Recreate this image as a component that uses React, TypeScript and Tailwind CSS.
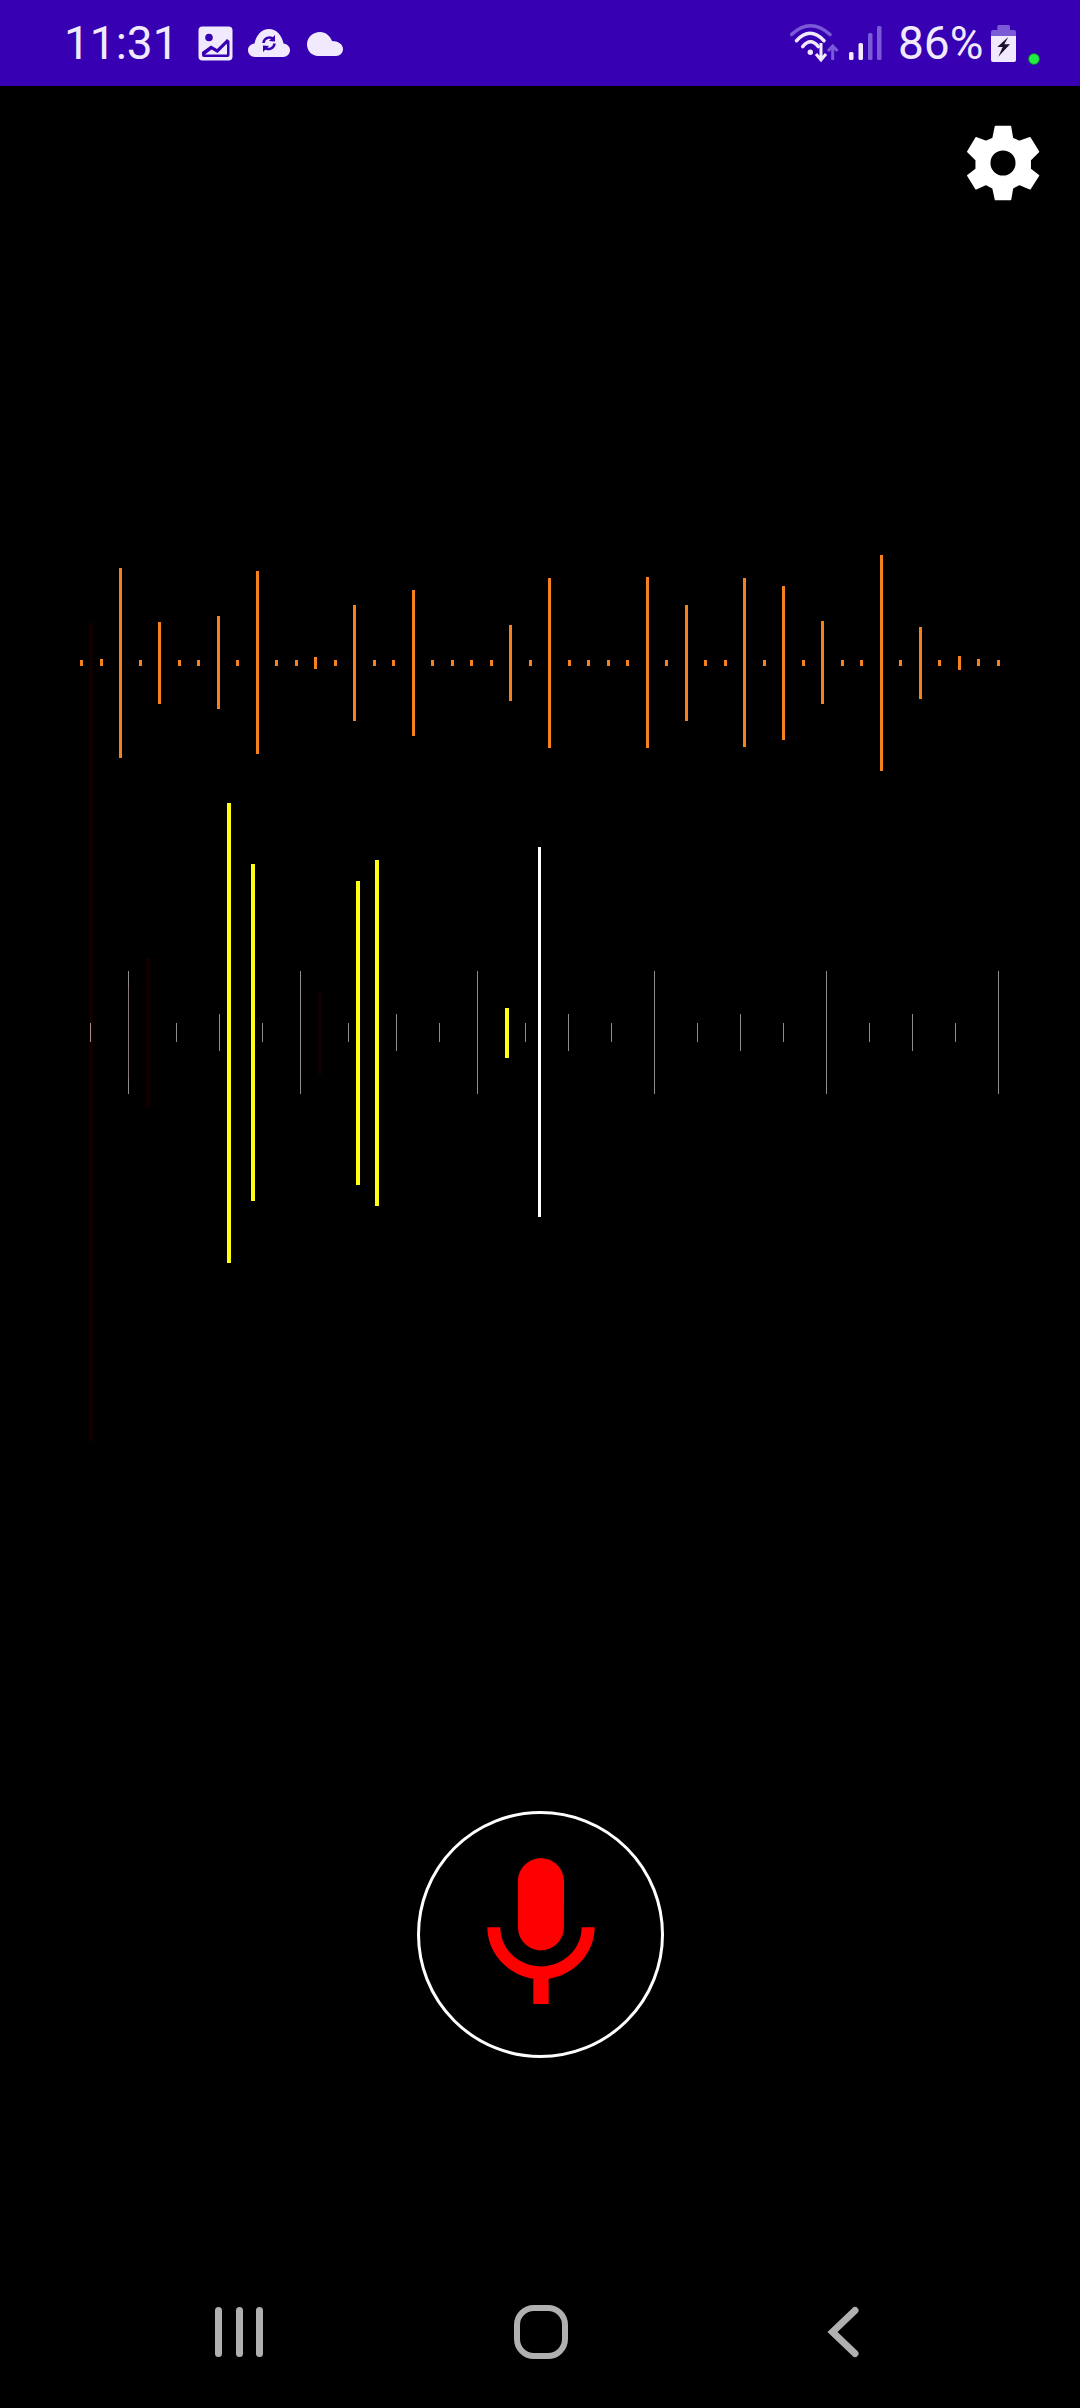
const smallO = 6;
type Bar = [number, number, number];
const orangeBars: Bar[] = [];
const orangeTall: Record<number, [number, number]> = {
  1: [659, 666], 2: [568, 758], 4: [622, 704], 7: [616, 709], 9: [571, 754], 12: [657, 669], 14: [605, 721],
  17: [590, 736], 22: [625, 701], 24: [578, 748], 29: [577, 748], 31: [605, 721], 34: [578, 747], 36: [586, 740],
  38: [621, 704], 41: [555, 771], 43: [627, 699], 45: [656, 670], 46: [659, 666],
};
for (let i = 0; i < 48; i++) {
  const x = Math.round(80 + (i * 917) / 47);
  const t = orangeTall[i];
  orangeBars.push([x, t ? t[0] : 660, t ? t[1] : 660 + smallO]);
}
const S: [number, number] = [1023, 1042];
const M: [number, number] = [1014, 1051];
const L: [number, number] = [971, 1094];
const ticks: [number, [number, number]][] = [
  [90, S], [128, L], [176, S], [219, M], [262, S], [300, L], [348, S], [396, M], [439, S], [477, L], [525, S], [568, M],
  [611, S], [654, L], [697, S], [740, M], [783, S], [826, L], [869, S], [912, M], [955, S], [998, L],
];
const dark: Bar[] = [[89, 623, 1441], [146, 958, 1107], [318, 991, 1074]];
const yellow: Bar[] = [[227, 803, 1263], [251, 864, 1201], [356, 881, 1185], [375, 860, 1206], [505, 1008, 1058]];

function Waveforms() {
  return (
    <svg width="1080" height="920" viewBox="0 540 1080 920" shapeRendering="crispEdges" className="block">
      {dark.map(([x, a, b], i) => (
        <rect key={i} x={x} y={a} width="4" height={b - a} fill="#100000" />
      ))}
      {orangeBars.map(([x, a, b], i) => (
        <rect key={i} x={x} y={a} width="3" height={b - a} fill="#f5821f" />
      ))}
      {ticks.map(([x, [a, b]], i) => (
        <rect key={i} x={x} y={a} width="1" height={b - a} fill="#8c8c8c" />
      ))}
      <rect x="90" y="1024" width="1" height="18" fill="#a09090" />
      <rect x="128" y="987" width="1" height="91" fill="#8c7878" />
      {yellow.map(([x, a, b], i) => (
        <rect key={i} x={x} y={a} width="4" height={b - a} fill="#ffff14" />
      ))}
      <rect x="538" y="847" width="3" height="370" fill="#ffffff" />
    </svg>
  );
}

function StatusBar() {
  const ink = "#f1e9fd";
  const dim = "#7b5ad6";
  return (
    <div className="flex h-[86px] items-center bg-[#3700b3] pr-[40px] font-['Roboto',sans-serif] text-[46px] leading-none text-[#f1e9fd]">
      <span className="ml-[64px] w-[116px]">11:31</span>
      <svg className="ml-[18px]" width="35" height="35" viewBox="0 0 35 35">
        <rect x="0.500" y="0.500" width="34" height="34" rx="4" fill={ink} />
        <circle cx="11" cy="11.500" r="3.800" fill="#3700b3" />
        <path d="M4 29 L4 26 L13 19.500 L19 23 L29 13 L31.500 15 L31.500 29 Q31.500 31 29.500 31 L6 31 Q4 31 4 29 Z" fill="#3700b3" />
        <path d="M7 28.500 L13.500 23.500 L19.500 27 L28.500 18 L29 18.500 L29 28.500 Z" fill={ink} />
      </svg>
      <svg className="ml-[15px]" width="42" height="28" viewBox="0 0 42 28">
        <path d="M7 28 C3 28 0 25 0 21 C0 17.500 3 15 6.500 14.500 C8 6 14 0 21 0 C28 0 34 6 35.500 14.500 C39 15 42 17.500 42 21 C42 25 39 28 35 28 Z" fill={ink} />
        <path d="M15.500 14 A6 6 0 0 1 25.500 10" fill="none" stroke="#3700b3" strokeWidth="2.500" />
        <path d="M27 6 L27 12.500 L21 12 Z" fill="#3700b3" />
        <path d="M26.500 14.500 A6 6 0 0 1 16.500 18.500" fill="none" stroke="#3700b3" strokeWidth="2.500" />
        <path d="M15 23 L15 16.500 L21 17 Z" fill="#3700b3" />
      </svg>
      <svg className="ml-[17px] mt-[2px]" width="36" height="24" viewBox="0 0 36 24">
        <path d="M11 24 C5 24 0 19 0 12.500 C0 5 6 0 13 0 C19 0 23 4 25 9 C31 9 36 12 36 17 C36 21 33 24 29 24 Z" fill={ink} />
      </svg>
      <div className="flex-1" />
      <svg width="50" height="42" viewBox="0 0 50 42">
        <path d="M1.500 12.500 Q20.500 -5 40 12.500" fill="none" stroke={dim} strokeWidth="3.500" strokeLinecap="round" />
        <path d="M6.500 18.700 Q20 4 34 18.700" fill="none" stroke={ink} strokeWidth="3.500" strokeLinecap="round" />
        <path d="M12.700 24.700 Q20.500 15 28.300 24.700" fill="none" stroke={ink} strokeWidth="3.500" strokeLinecap="round" />
        <circle cx="20.300" cy="30.300" r="2.700" fill={ink} />
        <path d="M31 21 L31 37 M26 32 L31 38 L36 32" fill="none" stroke={ink} strokeWidth="3" />
        <path d="M42.700 38 L42.700 25 M38 29 L42.700 24 L47.500 29" fill="none" stroke={dim} strokeWidth="3" />
      </svg>
      <svg className="ml-[9px]" width="33" height="34" viewBox="0 0 33 34">
        <rect x="0" y="26" width="4.500" height="8" rx="1.500" fill={ink} />
        <rect x="9.500" y="17" width="4.500" height="17" rx="1.500" fill={ink} />
        <rect x="19" y="7" width="4.500" height="27" rx="1.500" fill={dim} />
        <rect x="28" y="0" width="4.500" height="34" rx="1.500" fill={dim} />
      </svg>
      <span className="ml-[16px] w-[88px]">86%</span>
      <svg className="ml-[5px]" width="25" height="37" viewBox="0 0 25 37">
        <rect x="6.300" y="0" width="12.700" height="7" rx="1.500" fill={dim} />
        <path d="M2 5 H23 Q25 5 25 7 V12 H0 V7 Q0 5 2 5 Z" fill={dim} />
        <path d="M0 11 H25 V35 Q25 37 23 37 H2 Q0 37 0 35 Z" fill={ink} />
        <path d="M17.300 12 L6.300 22 L11.700 22 L7.300 31.700 L19 19.300 L13.300 19.300 Z" fill="#1a1030" />
      </svg>
      <span className="ml-[12px] mt-[32px] h-[12px] w-[12px] rounded-full border border-[#0e6b3a] bg-[#22ee44]" />
    </div>
  );
}

export default function App() {
  return (
    <div className="flex h-[2408px] w-[1080px] flex-col overflow-hidden bg-black">
      <StatusBar />
      <div className="mr-[39px] mt-[39px] flex justify-end">
        <svg width="74" height="76" viewBox="0 0 74 76">
          <path
            fillRule="evenodd"
            fill="#ffffff"
            stroke="#ffffff"
            strokeWidth="1.500"
            strokeLinejoin="round"
            d="M28.500 1.500 L43.500 1.500 L45.500 13.500 L52.300 16.500 L63 12.800 L71.500 26.700 L63.200 35 L63.200 44 L71.500 50.700 L63 63.800 L52.300 59.300 L45.500 63 L43.500 74.500 L28.500 74.500 L26 63 L19 59.300 L9 63.800 L0.800 50.700 L9.200 44 L9.200 35 L0.800 26.700 L9 12.800 L19 16.500 L26 13.500 Z M36 24.700 A13.300 13.300 0 1 0 36 51.300 A13.300 13.300 0 1 0 36 24.700 Z"
          />
        </svg>
      </div>
      <div className="mt-[339px]">
        <Waveforms />
      </div>
      <div className="mt-[351px] flex justify-center">
        <div className="ml-[1px] flex h-[247px] w-[247px] items-center justify-center rounded-full border-[3px] border-white">
          <svg width="184" height="184" viewBox="0 0 24 24" fill="#ff0000">
            <path d="M12 14c1.660 0 2.990-1.340 2.990-3L15 5c0-1.660-1.340-3-3-3S9 3.340 9 5v6c0 1.660 1.340 3 3 3zm5.300-3c0 3-2.540 5.100-5.300 5.100S6.700 14 6.700 11H5c0 3.410 2.720 6.230 6 6.720V21h2v-3.280c3.280-.48 6-3.300 6-6.720h-1.700z" />
          </svg>
        </div>
      </div>
      <div className="mt-[247px] flex h-[54px] items-center">
        <div className="ml-[215px] flex h-[50px] w-[48px] justify-between">
          <div className="w-[7px] rounded-full bg-[#b0b0b0]" />
          <div className="w-[7px] rounded-full bg-[#b0b0b0]" />
          <div className="w-[7px] rounded-full bg-[#b0b0b0]" />
        </div>
        <div className="ml-[251px] h-[54px] w-[54px] rounded-[20px] border-[6px] border-[#b0b0b0]" />
        <svg className="ml-[258px]" width="34" height="54" viewBox="0 0 34 54">
          <path d="M29 5.500 L6.500 27 L29 48.500" fill="none" stroke="#b0b0b0" strokeWidth="7" strokeLinecap="round" strokeLinejoin="miter" />
        </svg>
      </div>
    </div>
  );
}
